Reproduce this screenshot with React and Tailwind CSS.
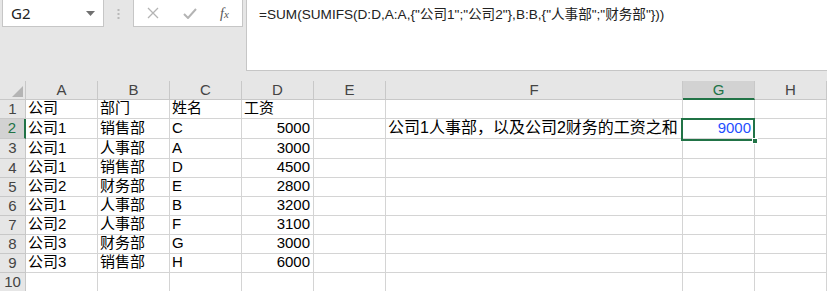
import React from 'react'

const cols = ['A', 'B', 'C', 'D', 'E', 'F', 'G', 'H']
const widths = ['w-[72px]', 'w-[72px]', 'w-[72px]', 'w-[72px]', 'w-[72px]', 'w-[297px]', 'w-[72px]', 'w-[72px]']
const heights = ['h-[19px]', 'h-[20px]', 'h-[20px]', 'h-[19px]', 'h-[19px]', 'h-[19px]', 'h-[19px]', 'h-[19px]', 'h-[19px]', 'h-[19px]']

const rows = [
  ['公司', '部门', '姓名', '工资', '', '', '', ''],
  ['公司1', '销售部', 'C', 5000, '', '公司1人事部，以及公司2财务的工资之和', 9000, ''],
  ['公司1', '人事部', 'A', 3000, '', '', '', ''],
  ['公司1', '销售部', 'D', 4500, '', '', '', ''],
  ['公司2', '财务部', 'E', 2800, '', '', '', ''],
  ['公司1', '人事部', 'B', 3200, '', '', '', ''],
  ['公司2', '人事部', 'F', 3100, '', '', '', ''],
  ['公司3', '财务部', 'G', 3000, '', '', '', ''],
  ['公司3', '销售部', 'H', 6000, '', '', '', ''],
  ['', '', '', '', '', '', '', ''],
]

const font = 'font-["Liberation_Sans","Noto_Sans_CJK_SC",sans-serif]'

function FormulaBar() {
  return (
    <div className="flex h-[81px] bg-[#e6e6e6]">
      {/* name box */}
      <div className="ml-[2px] flex h-[27px] w-[102px] items-center justify-between border-x border-b border-[#c6c6c6] bg-white pl-[8px] pr-[8px]">
        <span className="text-[15px] text-[#222]">G2</span>
        <svg width="9" height="5" viewBox="0 0 9 5"><path d="M0 0h9L4.5 5z" fill="#707070" /></svg>
      </div>
      <div className="flex w-[29px] justify-center pt-[9px]">
        <svg width="3" height="10" viewBox="0 0 3 10">
          <rect x="0.5" y="0" width="2" height="2" fill="#b8b8b8" />
          <rect x="0.5" y="4" width="2" height="2" fill="#b8b8b8" />
          <rect x="0.5" y="8" width="2" height="2" fill="#b8b8b8" />
        </svg>
      </div>
      {/* cancel / enter / fx */}
      <div className="flex h-[27px] w-[110px] items-center border-x border-b border-[#c6c6c6] bg-white">
        <svg className="ml-[13px]" width="12" height="12" viewBox="0 0 12 12">
          <path d="M1 1l10 10M11 1L1 11" stroke="#b4b4b4" strokeWidth="1.3" />
        </svg>
        <svg className="ml-[24px]" width="14" height="11" viewBox="0 0 14 11">
          <path d="M1 6l4 4 8-9" stroke="#b4b4b4" strokeWidth="2" fill="none" />
        </svg>
        <span className="ml-[23px] font-['Liberation_Serif',serif] text-[14px] italic text-[#555]">
          f<span className="text-[11px]">x</span>
        </span>
      </div>
      {/* formula */}
      <div className={`ml-[3px] h-[71px] flex-1 border-b border-l border-[#c6c6c6] bg-white pl-[12px] pt-[5px] text-[13.6px] text-[#222] ${font}`}>
        =SUM(SUMIFS(D:D,A:A,{'{'}"公司1";"公司2"{'}'},B:B,{'{'}"人事部";"财务部"{'}'}))
      </div>
    </div>
  )
}

function Sheet() {
  return (
    <div className={`relative ${font}`}>
      {/* header row */}
      <div className="flex h-[19px]">
        <div className="relative w-[26px] border-b border-r border-[#c8c8c8] bg-[#e6e6e6]">
          <svg className="absolute bottom-[2px] right-[2px]" width="11" height="11" viewBox="0 0 11 11">
            <path d="M11 0v11H0z" fill="#b4b4b4" />
          </svg>
        </div>
        {cols.map((c, i) =>
          c === 'G' ? (
            <div key={c} className={`${widths[i]} flex items-center justify-center border-b-2 border-r border-b-[#217346] border-r-[#c8c8c8] bg-[#d2d2d2] pt-[1px] text-[15px] text-[#217346]`}>
              {c}
            </div>
          ) : (
            <div key={c} className={`${widths[i]} flex items-center justify-center border-b border-r border-[#c8c8c8] bg-[#e6e6e6] text-[15px] text-[#444]`}>
              {c}
            </div>
          )
        )}
      </div>
      {rows.map((r, ri) => (
        <div key={ri} className={`flex ${heights[ri]}`}>
          {ri === 1 ? (
            <div className="flex w-[26px] items-center justify-center border-b border-r-2 border-b-[#c8c8c8] border-r-[#217346] bg-[#d2d2d2] text-[15px] text-[#217346]">
              {ri + 1}
            </div>
          ) : (
            <div className="flex w-[26px] items-center justify-center border-b border-r border-[#c8c8c8] bg-[#e6e6e6] text-[15px] text-[#444]">
              {ri + 1}
            </div>
          )}
          {r.map((v, ci) => (
            <div
              key={ci}
              className={`${widths[ci]} flex items-end overflow-visible whitespace-nowrap border-b border-r border-[#d4d4d4] bg-white pb-[1px] leading-[18px] ${
                typeof v === 'number' ? 'justify-end pr-[3px]' : 'pl-[2px]'
              } ${ci === 6 ? 'text-[#1f4fff]' : 'text-black'} ${ci === 5 ? 'text-[16px]' : 'text-[15px]'}`}
            >
              {v}
            </div>
          ))}
        </div>
      ))}
      {/* active cell G2 */}
      <div className="absolute left-[681px] top-[37px] h-[23px] w-[74px] border-2 border-[#217346]" />
      <div className="absolute left-[752px] top-[57px] h-[6px] w-[6px] border border-white bg-[#217346]" />
    </div>
  )
}

export default function App() {
  return (
    <div className="h-[291px] w-[827px] overflow-hidden bg-white">
      <FormulaBar />
      <Sheet />
    </div>
  )
}
